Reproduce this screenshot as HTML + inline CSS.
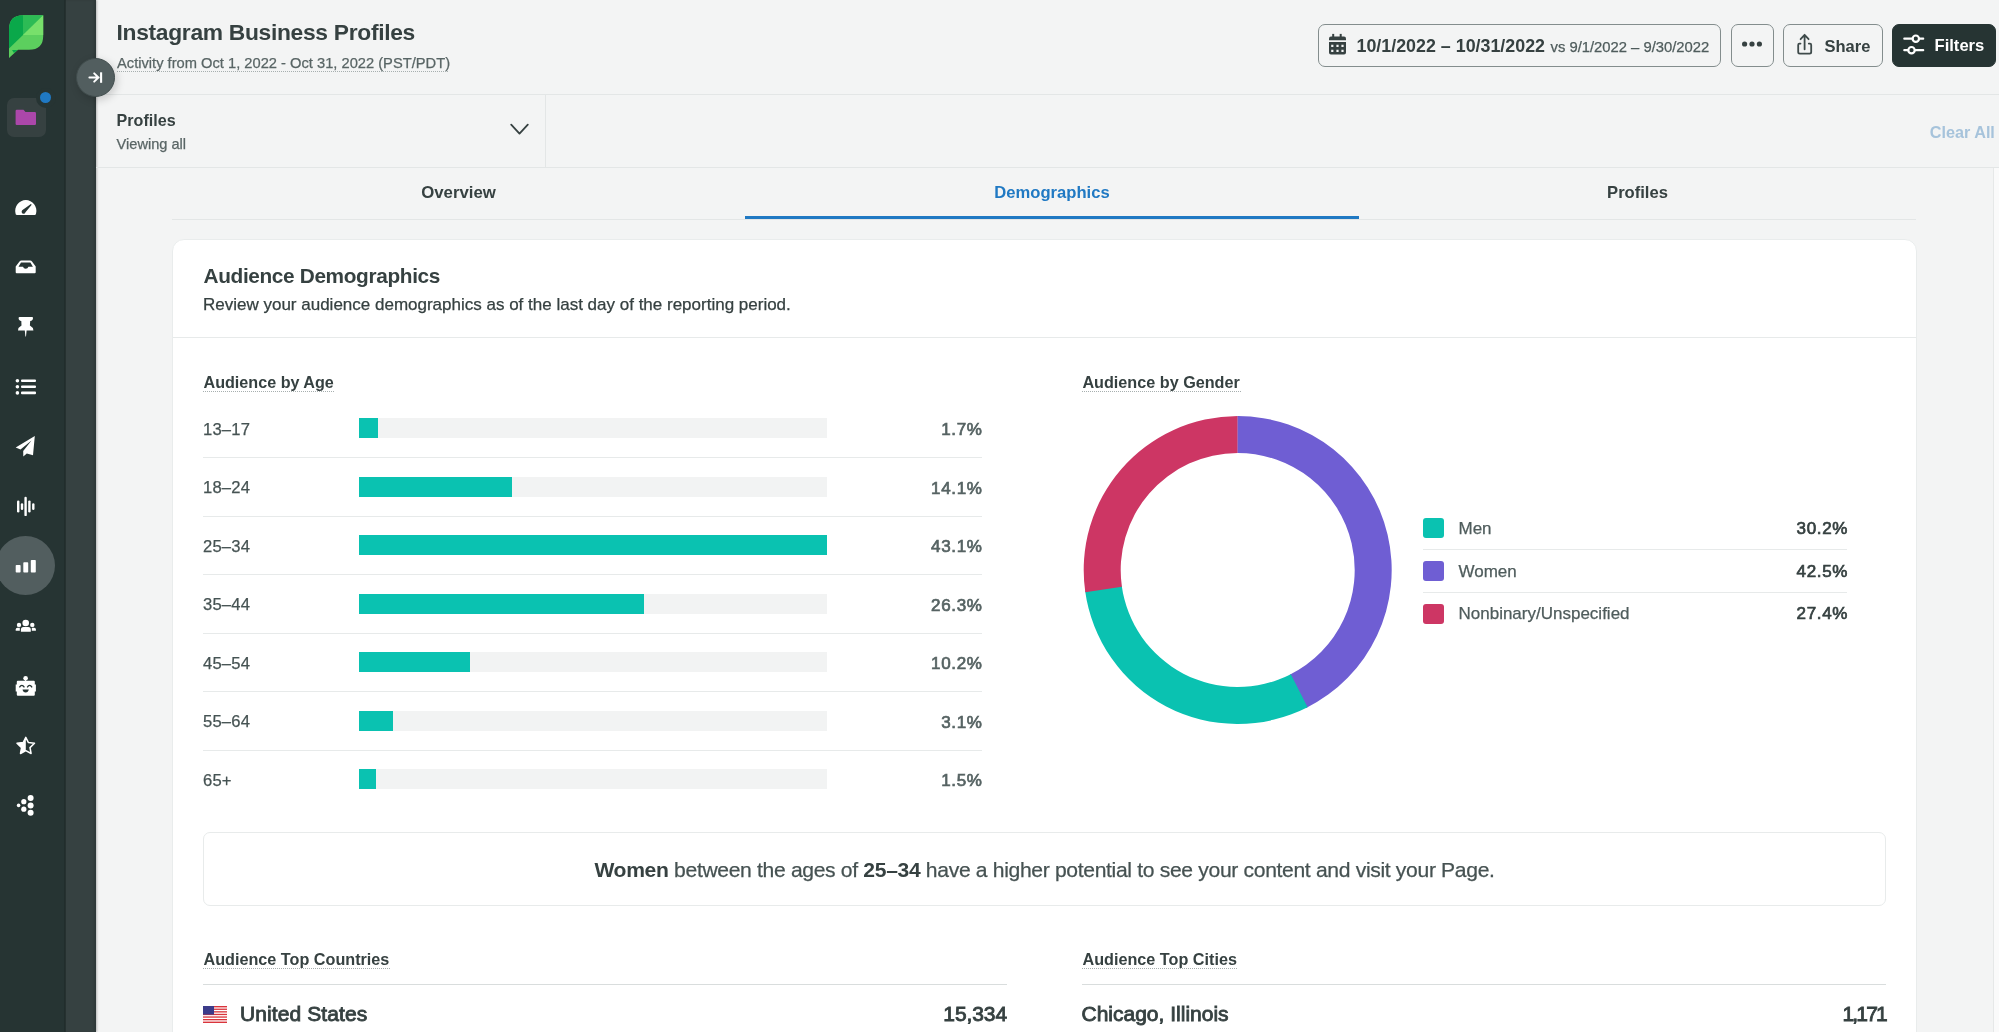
<!DOCTYPE html>
<html><head><meta charset="utf-8">
<style>
*{box-sizing:border-box;margin:0;padding:0}
html,body{width:1999px;height:1032px;overflow:hidden;background:#f3f4f4;-webkit-font-smoothing:antialiased;font-family:"Liberation Sans",sans-serif;color:#364141}
.abs{position:absolute}
.t{position:absolute;white-space:nowrap;line-height:1;-webkit-text-stroke:0.25px currentColor}
.r{text-align:right}
.b{font-weight:bold;-webkit-text-stroke-width:0}
b{-webkit-text-stroke-width:0}
.btn{position:absolute;top:24px;height:43px;border:1.2px solid #838d8d;border-radius:7px}
.hl{position:absolute;height:1px;background:#e7eaea}
.dot{position:absolute;height:1px;background-image:linear-gradient(to right,#a7afaf 50%,transparent 50%);background-size:2px 1px}
.bbg{position:absolute;left:359px;width:468px;height:20px;background:#f2f3f3}
.bar{position:absolute;left:359px;height:20px;background:#0ac2b1}
.age{left:203px;font-size:16.6px;letter-spacing:0.2px;color:#465353;margin-top:0.6px}
.pct{left:882px;width:100.7px;font-size:17px;color:#566363;letter-spacing:0.7px;text-align:right;-webkit-text-stroke:0.7px #566363 !important}
.sq{position:absolute;left:1423px;width:21px;height:20px;border-radius:3px}
.leg{left:1458.5px;font-size:17px;color:#4f5c5c}
.lv{left:1747px;width:101.2px;font-size:17px;color:#364141;letter-spacing:0.7px;text-align:right;-webkit-text-stroke:0.7px #364141 !important}
</style></head>
<body>
<div style="position:absolute;left:0;top:0;width:1999px;height:1032px;will-change:transform;overflow:hidden">
<!-- sidebar -->
<div class="abs" style="left:0;top:0;width:65px;height:1032px;background:#263433"></div>
<div class="abs" style="left:65px;top:0;width:31px;height:1032px;background:#364141;box-shadow:inset -2px 0 2px rgba(0,0,0,0.12),1px 0 2px rgba(0,0,0,0.25)"></div>
<div class="abs" style="left:64px;top:0;width:2px;height:1032px;background:#1f2b2a;opacity:0.7"></div>

<!-- logo -->
<svg class="abs" style="left:0;top:0" width="65" height="65" viewBox="0 0 65 65">
  <defs><clipPath id="lg"><path d="M9,58 L9,29.5 Q9,15.3 23,15.3 L43.2,15.3 L43.2,36 Q43.2,49.8 29,49.8 L18,49.8 Z"/></clipPath></defs>
  <g clip-path="url(#lg)">
    <rect x="0" y="0" width="65" height="65" fill="#5ccf5e"/>
    <polygon points="0,0 23,0 23,34.97 0,57.4" fill="#0aa84a"/>
    <polygon points="23,0 58.9,0 23,34.97" fill="#2dbb55"/>
    <polygon points="58.9,0 65,0 65,35 23,35 23,34.97" fill="#78e06b"/>
    <polygon points="12,50 18,50 14,53" fill="#0aa84a"/>
  </g>
</svg>

<!-- folder (active app) -->
<div class="abs" style="left:7px;top:98px;width:39px;height:39px;border-radius:7px;background:#364141"></div>
<div class="abs" style="left:35.8px;top:88px;width:20px;height:20px;border-radius:50%;background:#263433"></div>
<div class="abs" style="left:40.2px;top:92.4px;width:11px;height:11px;border-radius:50%;background:#2079c3"></div>
<svg class="abs" style="left:15px;top:109px" width="22" height="17" viewBox="0 0 22 17"><path d="M0.6,2 Q0.6,0.8 1.8,0.8 L8.5,0.8 L10.5,3 L19.8,3 Q21,3 21,4.2 L21,15 Q21,16.1 19.8,16.1 L1.8,16.1 Q0.6,16.1 0.6,15 Z" fill="#ab47aa"/></svg>

<!-- nav icons -->
<svg class="abs" style="left:0;top:180px" width="65" height="660" viewBox="0 180 65 660" fill="#fff">
  <!-- gauge -->
  <path d="M16.8,215 Q15.5,215 15.5,213.2 A10.6,10.6 0 1 1 36.1,213.2 Q36.1,215 34.8,215 Z"/>
  <path d="M23.4,213.8 A2.1,2.1 0 0 1 22.2,210.3 L30.9,204 L31.7,204.8 L25.5,212.3 A2.1,2.1 0 0 1 23.4,213.8 Z" fill="#263433"/>
  <!-- inbox -->
  <path d="M15.7,266.5 L19.5,261.5 Q20.2,260.5 21.5,260.5 L30,260.5 Q31.3,260.5 32,261.5 L35.7,266.5 L35.7,272.3 Q35.7,273.3 34.7,273.3 L16.7,273.3 Q15.7,273.3 15.7,272.3 Z M18.5,266.8 L23,266.8 Q23.6,268.8 25.7,268.8 Q27.8,268.8 28.4,266.8 L32.9,266.8 L30.4,262.6 L21,262.6 Z" fill-rule="evenodd"/>
  <!-- pin -->
  <path d="M19.6,317 L32.2,317 Q33,317 33,318 Q33,320.6 30.2,321 L29.9,325.5 Q33,327 33.4,330.5 L26.6,330.5 L26,336.5 L25.4,336.5 L24.8,330.5 L18,330.5 Q18.4,327 21.5,325.5 L21.3,321 Q18.6,320.6 18.6,318 Q18.6,317 19.6,317 Z"/>
  <!-- list -->
  <circle cx="17.4" cy="380.7" r="1.8"/><circle cx="17.4" cy="386.7" r="1.8"/><circle cx="17.4" cy="392.9" r="1.8"/>
  <rect x="21" y="379.4" width="15" height="2.6" rx="1"/><rect x="21" y="385.4" width="15" height="2.6" rx="1"/><rect x="21" y="391.6" width="15" height="2.6" rx="1"/>
  <!-- paper plane -->
  <path d="M34.8,436 L15.7,447.5 L20.5,449.6 L31.5,440.5 L23.2,451 L23.3,456.4 L26.8,453.5 L33,455.2 Z"/>
  <!-- waveform -->
  <rect x="17" y="500.4" width="2.4" height="12" rx="1.2"/>
  <rect x="20.8" y="503.3" width="2.4" height="6.6" rx="1.2"/>
  <rect x="24.4" y="496.7" width="2.4" height="19.4" rx="1.2"/>
  <rect x="28.2" y="500.4" width="2.4" height="12" rx="1.2"/>
  <rect x="32.1" y="503.3" width="2.4" height="6.6" rx="1.2"/>
</svg>
<div class="abs" style="left:-4.5px;top:535.9px;width:59.2px;height:59.2px;border-radius:50%;background:#525e5f"></div>
<svg class="abs" style="left:0;top:540px" width="65" height="300" viewBox="0 540 65 300" fill="#fff">
  <rect x="15.7" y="565" width="4.9" height="7.5" rx="0.8"/>
  <rect x="23.3" y="562.3" width="4.9" height="10.2" rx="0.8"/>
  <rect x="30.8" y="560" width="5" height="12.5" rx="0.8"/>
  <!-- people -->
  <circle cx="25.7" cy="623" r="3.3"/>
  <circle cx="19" cy="624.9" r="2.2"/><circle cx="32.3" cy="624.9" r="2.2"/>
  <path d="M20.9,631.7 L20.9,629.5 Q20.9,627 23.5,627 L28.2,627 Q30.8,627 30.8,629.5 L30.8,631.7 Z"/>
  <path d="M15.7,630.8 L15.7,629.4 Q15.7,627.7 17.4,627.7 L19.8,627.7 L19.8,630.8 Z"/>
  <path d="M35.9,630.8 L35.9,629.4 Q35.9,627.7 34.2,627.7 L31.8,627.7 L31.8,630.8 Z"/>
  <!-- robot -->
  <circle cx="25.6" cy="678.2" r="2.3"/>
  <rect x="25.1" y="679" width="1" height="2.5"/>
  <path d="M17.8,680.8 L33.8,680.8 Q34.8,680.8 34.8,681.8 L34.8,684.5 L35.9,684.5 L35.9,691.5 L34.8,691.5 L34.8,694.7 Q34.8,695.7 33.8,695.7 L17.8,695.7 Q16.8,695.7 16.8,694.7 L16.8,691.5 L15.7,691.5 L15.7,684.5 L16.8,684.5 L16.8,681.8 Q16.8,680.8 17.8,680.8 Z"/>
  <path d="M19.4,687.3 Q21.8,683.6 24.4,687.3" stroke="#263433" stroke-width="1.3" fill="none"/>
  <path d="M27.2,687.3 Q29.6,683.6 32.1,687.3" stroke="#263433" stroke-width="1.3" fill="none"/>
  <path d="M22.5,689.4 L28.8,689.4 Q28.2,692.4 25.65,692.4 Q23.1,692.4 22.5,689.4 Z" fill="#263433"/>
  <!-- star -->
  <path d="M25.8,737.4 L28.3,742.4 L34.5,743.2 L30,747.6 L31.1,753.5 L25.8,750.7 L20.5,753.5 L21.6,747.6 L17,743.2 L23.3,742.4 Z" fill="none" stroke="#fff" stroke-width="1.5" stroke-linejoin="round"/>
  <path d="M25.8,737.4 L23.3,742.4 L17,743.2 L21.6,747.6 L20.5,753.5 L25.8,750.7 Z"/>
  <!-- dots -->
  <circle cx="30.6" cy="798.1" r="3"/><circle cx="30.6" cy="805.4" r="3"/><circle cx="30.6" cy="812.7" r="3"/>
  <circle cx="23.8" cy="801.7" r="2.6"/><circle cx="23.8" cy="809.2" r="2.6"/>
  <circle cx="18.6" cy="805.4" r="1.8"/>
</svg>

<!-- scroll track right -->
<div class="abs" style="left:1993px;top:168px;width:6px;height:864px;background:#fafafa;border-left:1px solid #e6e8e8"></div>

<!-- header -->
<div class="t b" style="left:116.5px;top:21.1px;font-size:22.8px;letter-spacing:-0.3px;color:#364141">Instagram Business Profiles</div>
<div class="t" style="left:117px;top:56px;font-size:14.7px;color:#596565">Activity from Oct 1, 2022 - Oct 31, 2022 (PST/PDT)</div>
<div class="dot" style="left:117px;top:71px;width:332px"></div>
<div class="hl" style="left:96px;top:94px;width:1903px;background:#e3e6e6"></div>

<!-- collapse button -->
<div class="abs" style="left:76px;top:58px;width:39px;height:39px;border-radius:50%;background:#525e5f;border:1px solid #404c4c;box-shadow:2px 3px 8px rgba(0,0,0,0.18)"></div>
<svg class="abs" style="left:76px;top:58px" width="39" height="39" viewBox="76 58 39 39" fill="none" stroke="#fff" stroke-width="2" stroke-linecap="round">
  <path d="M89.4,77.5 L98.6,77.5 M94.2,73.4 L98.4,77.5 L94.2,81.6"/>
  <path d="M101.1,72.3 L101.1,82.8" stroke-width="2.1" stroke-linecap="butt"/>
</svg>

<!-- buttons -->
<div class="btn" style="left:1318px;width:403px"></div>
<svg class="abs" style="left:1326px;top:30px" width="24" height="28" viewBox="1326 30 24 28" fill="#364141">
  <rect x="1332.2" y="33.9" width="2" height="4"/><rect x="1339.7" y="33.9" width="2" height="4"/>
  <path d="M1329,38.5 Q1329,36.6 1331,36.6 L1344,36.6 Q1346,36.6 1346,38.5 L1346,40.2 L1329,40.2 Z"/>
  <path d="M1329,41.9 L1346,41.9 L1346,52.6 Q1346,54.6 1344,54.6 L1331,54.6 Q1329,54.6 1329,52.6 Z M1331.2,44.8 h2.2 v2.2 h-2.2 z M1336.4,44.8 h2.2 v2.2 h-2.2 z M1341.4,44.8 h2.2 v2.2 h-2.2 z M1331.2,49.8 h2.2 v2.2 h-2.2 z M1336.4,49.8 h2.2 v2.2 h-2.2 z M1341.4,49.8 h2.2 v2.2 h-2.2 z" fill-rule="evenodd"/>
</svg>
<div class="t b" style="left:1356.5px;top:37.6px;font-size:17.85px;color:#364141">10/1/2022 – 10/31/2022</div>
<div class="t" style="left:1550.5px;top:39.9px;font-size:14.8px;color:#4f5c5c">vs 9/1/2022 – 9/30/2022</div>

<div class="btn" style="left:1731px;width:43px"></div>
<svg class="abs" style="left:1740px;top:38px" width="24" height="12" viewBox="0 0 24 12" fill="#364141"><circle cx="4.6" cy="6" r="2.6"/><circle cx="12" cy="6" r="2.6"/><circle cx="19.4" cy="6" r="2.6"/></svg>

<div class="btn" style="left:1783px;width:100px"></div>
<svg class="abs" style="left:1792px;top:30px" width="24" height="28" viewBox="1792 30 24 28" fill="none" stroke="#3e4a4a" stroke-width="1.8" stroke-linecap="round" stroke-linejoin="round">
  <path d="M1804.6,49.3 L1804.6,35 M1800.6,39.2 L1804.6,34.8 L1808.6,39.2"/>
  <path d="M1800.5,43.6 L1799.4,43.6 Q1798.2,43.6 1798.2,45 L1798.2,52 Q1798.2,53.6 1799.8,53.6 L1809.6,53.6 Q1811.2,53.6 1811.2,52 L1811.2,45 Q1811.2,43.6 1810,43.6 L1808.8,43.6"/>
</svg>
<div class="t b" style="left:1824.5px;top:37.6px;font-size:16.5px;color:#364141">Share</div>

<div class="btn" style="left:1892px;width:104px;background:#263433;border-color:#263433"></div>
<svg class="abs" style="left:1898px;top:28px" width="32" height="32" viewBox="1898 28 32 32" fill="none" stroke="#fff" stroke-width="2.2" stroke-linecap="round">
  <path d="M1904.3,38.7 L1912.4,38.7 M1919.3,38.7 L1923.2,38.7 M1904.3,50.2 L1908.1,50.2 M1915,50.2 L1923.2,50.2"/>
  <circle cx="1915.8" cy="38.7" r="3.2"/><circle cx="1911.5" cy="50.2" r="3.2"/>
</svg>
<div class="t b" style="left:1934.5px;top:37.5px;font-size:16.6px;color:#fff">Filters</div>

<!-- profiles filter -->
<div class="t b" style="left:116.6px;top:112.2px;font-size:16.1px;color:#364141">Profiles</div>
<div class="t" style="left:116.6px;top:136.6px;font-size:14.6px;color:#596565">Viewing all</div>
<svg class="abs" style="left:505px;top:118px" width="28" height="22" viewBox="505 118 28 22" fill="none" stroke="#364141" stroke-width="1.8" stroke-linecap="round" stroke-linejoin="round"><path d="M511.2,124.6 L519.5,133.6 L527.8,124.6"/></svg>
<div class="abs" style="left:545px;top:95px;width:1px;height:72px;background:#e3e6e6"></div>
<div class="t b" style="left:1929.8px;top:123.5px;font-size:16.2px;color:#a6c3db">Clear All</div>
<div class="hl" style="left:96px;top:167px;width:1903px;background:#e3e6e6"></div>

<!-- tabs -->
<div class="t b" style="left:172px;width:573px;top:184.5px;font-size:16.8px;color:#364141;text-align:center">Overview</div>
<div class="t b" style="left:745px;width:614px;top:184.5px;font-size:16.6px;color:#2079c3;text-align:center">Demographics</div>
<div class="t b" style="left:1359px;width:557px;top:184.5px;font-size:16.6px;color:#364141;text-align:center">Profiles</div>
<div class="hl" style="left:172px;top:219px;width:1744px;background:#e3e6e6"></div>
<div class="abs" style="left:745px;top:216px;width:614px;height:3px;background:#2079c3"></div>

<!-- card -->
<div class="abs" style="left:172px;top:239px;width:1745px;height:900px;background:#fff;border:1px solid #e9ecec;border-radius:12px"></div>
<div class="t b" style="left:203.5px;top:266px;font-size:20.8px;letter-spacing:-0.35px;color:#364141">Audience Demographics</div>
<div class="t" style="left:203px;top:295.9px;font-size:17px;color:#364141">Review your audience demographics as of the last day of the reporting period.</div>
<div class="hl" style="left:173px;top:337px;width:1743px"></div>

<!-- age -->
<div class="t b" style="left:203.5px;top:374.2px;font-size:16.15px;color:#364141">Audience by Age</div>
<div class="dot" style="left:203px;top:391px;width:132px"></div>

<div class="t age" style="top:421.2px">13–17</div>
<div class="bbg" style="top:418px"></div><div class="bar" style="top:418px;width:18.5px"></div>
<div class="t pct" style="top:421.2px">1.7%</div>
<div class="hl" style="left:203px;top:457px;width:779px"></div>

<div class="t age" style="top:479.7px">18–24</div>
<div class="bbg" style="top:477px"></div><div class="bar" style="top:477px;width:152.7px"></div>
<div class="t pct" style="top:479.7px">14.1%</div>
<div class="hl" style="left:203px;top:515.5px;width:779px"></div>

<div class="t age" style="top:538.2px">25–34</div>
<div class="bbg" style="top:535px"></div><div class="bar" style="top:535px;width:468px"></div>
<div class="t pct" style="top:538.2px">43.1%</div>
<div class="hl" style="left:203px;top:574px;width:779px"></div>

<div class="t age" style="top:596.7px">35–44</div>
<div class="bbg" style="top:594px"></div><div class="bar" style="top:594px;width:285.3px"></div>
<div class="t pct" style="top:596.7px">26.3%</div>
<div class="hl" style="left:203px;top:632.5px;width:779px"></div>

<div class="t age" style="top:655.2px">45–54</div>
<div class="bbg" style="top:652px"></div><div class="bar" style="top:652px;width:110.7px"></div>
<div class="t pct" style="top:655.2px">10.2%</div>
<div class="hl" style="left:203px;top:691px;width:779px"></div>

<div class="t age" style="top:713.7px">55–64</div>
<div class="bbg" style="top:711px"></div><div class="bar" style="top:711px;width:33.6px"></div>
<div class="t pct" style="top:713.7px">3.1%</div>
<div class="hl" style="left:203px;top:749.5px;width:779px"></div>

<div class="t age" style="top:772.2px">65+</div>
<div class="bbg" style="top:769px"></div><div class="bar" style="top:769px;width:16.5px"></div>
<div class="t pct" style="top:772.2px">1.5%</div>

<!-- gender -->
<div class="t b" style="left:1082.4px;top:374.2px;font-size:16.2px;color:#364141">Audience by Gender</div>
<div class="dot" style="left:1082px;top:391px;width:159px"></div>
<svg class="abs" style="left:1070px;top:400px" width="340" height="340" viewBox="1070 400 340 340">
  <path d="M1237.70,416.00 A154,154 0 0 1 1306.17,707.94 L1289.72,674.80 A117,117 0 0 0 1237.70,453.00 Z" fill="#6f5ed3"/>
  <path d="M1307.61,707.22 A154,154 0 0 1 1085.08,590.58 L1121.75,585.64 A117,117 0 0 0 1290.82,674.25 Z" fill="#0ac2b1"/>
  <path d="M1085.31,592.18 A154,154 0 0 1 1237.67,416.00 L1237.68,453.00 A117,117 0 0 0 1121.92,586.85 Z" fill="#cd3664"/>
  <path d="M1237.70,416.00 A154,154 0 0 1 1239.31,416.01 L1238.93,453.01 A117,117 0 0 0 1237.70,453.00 Z" fill="#6f5ed3"/>
</svg>
<div class="sq" style="top:518px;background:#0ac2b1"></div>
<div class="t leg" style="top:520.2px">Men</div>
<div class="t lv" style="top:520.2px">30.2%</div>
<div class="hl" style="left:1423px;top:549px;width:424px"></div>
<div class="sq" style="top:561px;background:#6f5ed3"></div>
<div class="t leg" style="top:562.9px">Women</div>
<div class="t lv" style="top:562.9px">42.5%</div>
<div class="hl" style="left:1423px;top:592px;width:424px"></div>
<div class="sq" style="top:604px;background:#cd3664"></div>
<div class="t leg" style="top:604.9px">Nonbinary/Unspecified</div>
<div class="t lv" style="top:604.9px">27.4%</div>

<!-- insight -->
<div class="abs" style="left:203px;top:832px;width:1683px;height:74px;border:1.5px solid #e8ebeb;border-radius:7px"></div>
<div class="t" style="left:203px;width:1683px;top:859px;font-size:21.1px;letter-spacing:-0.33px;color:#465252;text-align:center"><b style="color:#364141">Women</b> between the ages of <b style="color:#364141">25–34</b> have a higher potential to see your content and visit your Page.</div>

<!-- bottom lists -->
<div class="t b" style="left:203.5px;top:950.6px;font-size:16.2px;color:#364141">Audience Top Countries</div>
<div class="dot" style="left:203px;top:968px;width:187px"></div>
<div class="abs" style="left:203px;top:984px;width:804px;height:1px;background:#d9dddd"></div>
<svg class="abs" style="left:203px;top:1006px" width="24" height="17" viewBox="0 0 24 17">
  <rect width="24" height="17" fill="#fff"/>
  <g fill="#d9343b"><rect y="0" width="24" height="1.4"/><rect y="2.6" width="24" height="1.3"/><rect y="5.2" width="24" height="1.3"/><rect y="7.8" width="24" height="1.3"/><rect y="10.4" width="24" height="1.3"/><rect y="13" width="24" height="1.3"/><rect y="15.6" width="24" height="1.4"/></g>
  <rect width="11" height="8.6" fill="#3c3b8a"/>
</svg>
<div class="t" style="left:240px;top:1002.9px;font-size:21px;letter-spacing:0.1px;-webkit-text-stroke:0.85px #364141;color:#364141">United States</div>
<div class="t r" style="left:857px;width:150px;top:1002.9px;font-size:21px;letter-spacing:-0.1px;-webkit-text-stroke:0.85px #364141;color:#364141">15,334</div>

<div class="t b" style="left:1082.5px;top:950.6px;font-size:16.2px;color:#364141">Audience Top Cities</div>
<div class="dot" style="left:1082px;top:968px;width:156px"></div>
<div class="abs" style="left:1082px;top:984px;width:804px;height:1px;background:#d9dddd"></div>
<div class="t" style="left:1081.5px;top:1002.9px;font-size:21px;letter-spacing:0px;-webkit-text-stroke:0.85px #364141;color:#364141">Chicago, Illinois</div>
<div class="t r" style="left:1736px;width:150px;top:1002.9px;font-size:21px;letter-spacing:-1.8px;-webkit-text-stroke:0.85px #364141;color:#364141">1,171</div>

</div>
</body></html>
